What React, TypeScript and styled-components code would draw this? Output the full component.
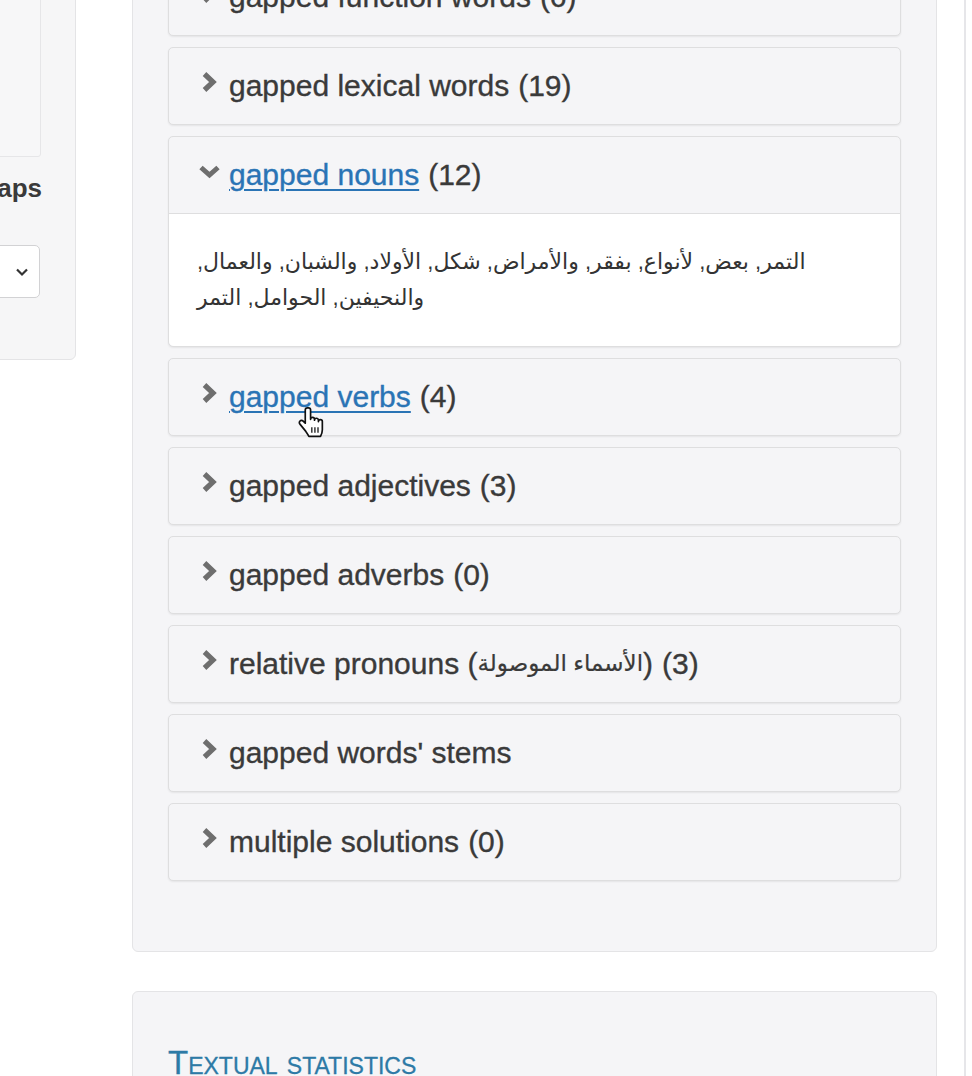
import React from "react";
import styled, { createGlobalStyle } from "styled-components";

const GlobalStyle = createGlobalStyle`
  html, body {
    margin: 0;
    padding: 0;
    background: #ffffff;
    overflow: hidden;
  }
  body {
    font-family: "Liberation Sans", "DejaVu Sans", Arial, sans-serif;
    color: #3a3a3a;
  }
`;

const Page = styled.div`
  display: flex;
  align-items: flex-start;
  margin-top: -80px;
  min-height: 1200px;
`;

const LeftCol = styled.div`
  width: 300px;
  margin-left: -224px;
  flex: none;
`;

const SidePanel = styled.div`
  background: #f6f6f7;
  border: 1px solid #e4e4e6;
  border-radius: 6px;
  padding: 36px 36px 61px 20px;
`;

const InnerBox = styled.div`
  height: 198px;
  border: 1px solid #e6e6e8;
  border-radius: 3px;
  background: #f7f7f8;
  margin-right: -2px;
`;

const SideLabel = styled.div`
  margin-top: 13px;
  font-size: 26px;
  line-height: 37px;
  font-weight: bold;
  color: #3a3a3a;
  text-align: right;
  margin-right: -3px;
`;

const Select = styled.div`
  margin-top: 38px;
  height: 51px;
  background: #ffffff;
  border: 1px solid #d2d2d4;
  border-radius: 5px;
  display: flex;
  align-items: center;
  justify-content: flex-end;
  padding-right: 9px;
  margin-right: -1px;
`;

const RightCol = styled.div`
  width: 805px;
  margin-left: 56px;
  flex: none;
  display: flex;
  flex-direction: column;
  gap: 39px;
`;

const Well = styled.div`
  background: #f5f5f7;
  border: 1px solid #e4e4e6;
  border-radius: 6px;
  padding: 37px 35px 70px 35px;
  display: flex;
  flex-direction: column;
  gap: 11px;
`;

const Item = styled.div`
  position: relative;
  border: 1px solid #dededf;
  border-radius: 5px;
  background: #f5f5f7;
  box-shadow: 0 1px 2px rgba(0, 0, 0, 0.07);
`;

const Header = styled.div<{ $open?: boolean }>`
  display: flex;
  align-items: center;
  padding: 21px 28px 22px 28px;
  font-size: 30px;
  line-height: 33px;
  color: #3a3a3a;
  -webkit-text-stroke: 0.35px #3a3a3a;
  border-bottom: ${(p) => (p.$open ? "1px solid #dededf" : "none")};
  white-space: nowrap;
`;

const IconBox = styled.span`
  width: 24px;
  height: 24px;
  margin-right: 8px;
  margin-bottom: 7px;
  display: flex;
  align-items: center;
  justify-content: center;
  flex: none;
`;

const TitleLink = styled.a`
  color: #2a74b5;
  -webkit-text-stroke: 0.35px #2a74b5;
  text-decoration: underline;
  text-decoration-thickness: 2px;
  text-underline-offset: 4px;
  cursor: pointer;
`;

const ArabicName = styled.bdi`
  font-size: 23px;
  -webkit-text-stroke: 0.2px #3a3a3a;
`;

const Count = styled.span`
  margin-left: 9px;
`;

const Body = styled.div`
  background: #ffffff;
  border-radius: 0 0 5px 5px;
  padding: 30px 28px;
  font-size: 22px;
  line-height: 36px;
  color: #333333;
  direction: ltr;
  text-align: left;
`;

const Cursor = styled.svg`
  position: absolute;
  left: 128px;
  top: 47px;
  width: 28px;
  height: 34px;
  pointer-events: none;
`;

const StatsPanel = styled.div`
  background: #f5f5f7;
  border: 1px solid #e4e4e6;
  border-radius: 6px;
  padding: 36px 35px;
  min-height: 200px;
`;

const StatsHeading = styled.h3`
  margin: 17px 0 0 0;
  font-size: 33px;
  line-height: 36px;
  font-weight: normal;
  font-variant: small-caps;
  color: #2d7aa6;
  -webkit-text-stroke: 0.3px #2d7aa6;
`;

const Divider = styled.div`
  align-self: stretch;
  width: 2px;
  margin-left: 27px;
  background: #e6e6e9;
  flex: none;
`;

const ChevronRight = () => (
  <svg width="17" height="22" viewBox="0 0 17 22">
    <polyline
      points="3.5,3 12,11 3.5,19"
      fill="none"
      stroke="#6e6e6e"
      strokeWidth="5.2"
      strokeLinejoin="miter"
    />
  </svg>
);

const ChevronDown = () => (
  <svg width="23" height="15" viewBox="0 0 23 15">
    <polyline
      points="3,3.5 11.5,11 20,3.5"
      fill="none"
      stroke="#6e6e6e"
      strokeWidth="5"
      strokeLinejoin="miter"
    />
  </svg>
);

const SelectChevron = () => (
  <svg width="16" height="12" viewBox="0 0 16 12">
    <polyline
      points="3,3.5 8,8.5 13,3.5"
      fill="none"
      stroke="#333"
      strokeWidth="2.2"
    />
  </svg>
);

type Entry = {
  title: string;
  count?: string;
  link?: boolean;
  open?: boolean;
  arabic?: string;
  cursor?: boolean;
};

const entries: Entry[] = [
  { title: "gapped function words", count: "(6)" },
  { title: "gapped lexical words", count: "(19)" },
  { title: "gapped nouns", count: "(12)", link: true, open: true },
  { title: "gapped verbs", count: "(4)", link: true, cursor: true },
  { title: "gapped adjectives", count: "(3)" },
  { title: "gapped adverbs", count: "(0)" },
  { title: "relative pronouns", arabic: "الأسماء الموصولة", count: "(3)" },
  { title: "gapped words' stems" },
  { title: "multiple solutions", count: "(0)" },
];

const nounsText =
  "التمر, بعض, لأنواع, بفقر, والأمراض, شكل, الأولاد, والشبان, والعمال, والنحيفين, الحوامل, التمر";

const HandCursor = () => (
  <Cursor viewBox="0 0 20 24">
    <path
      d="M7.5 1.2c-.9 0-1.6.7-1.6 1.6v9.3l-1.5-1.5c-.7-.7-1.7-.7-2.3 0-.6.6-.6 1.6 0 2.2l4.2 5.2c.9 1.2 1.7 2.6 2.2 3.6h8.3c.6-1.2 1.3-3 1.3-4.8v-5.8c0-.8-.6-1.4-1.4-1.4s-1.4.6-1.4 1.4v-1c0-.8-.6-1.4-1.4-1.4s-1.4.6-1.4 1.4v-.6c0-.8-.6-1.4-1.4-1.4s-1.4.6-1.4 1.4V2.8c0-.9-.7-1.6-1.6-1.6z"
      fill="#ffffff"
      stroke="#111"
      strokeWidth="1.2"
      strokeLinejoin="round"
    />
    <path d="M10.6 15v4M12.8 15v4M15 15v4" stroke="#111" strokeWidth="0.9" />
  </Cursor>
);

export default function App() {
  return (
    <>
      <GlobalStyle />
      <Page>
        <LeftCol>
          <SidePanel>
            <InnerBox />
            <SideLabel>Number of gaps</SideLabel>
            <Select>
              <SelectChevron />
            </Select>
          </SidePanel>
        </LeftCol>
        <RightCol>
          <Well>
            {entries.map((e) => (
              <Item key={e.title}>
                <Header $open={e.open}>
                  <IconBox>{e.open ? <ChevronDown /> : <ChevronRight />}</IconBox>
                  {e.link ? <TitleLink>{e.title}</TitleLink> : <span>{e.title}</span>}
                  {e.arabic ? (
                    <>
                      &nbsp;(<ArabicName>{e.arabic}</ArabicName>)
                    </>
                  ) : null}
                  {e.count ? <Count>{e.count}</Count> : null}
                </Header>
                {e.open ? <Body>{nounsText}</Body> : null}
                {e.cursor ? <HandCursor /> : null}
              </Item>
            ))}
          </Well>
          <StatsPanel>
            <StatsHeading>Textual statistics</StatsHeading>
          </StatsPanel>
        </RightCol>
        <Divider />
      </Page>
    </>
  );
}
